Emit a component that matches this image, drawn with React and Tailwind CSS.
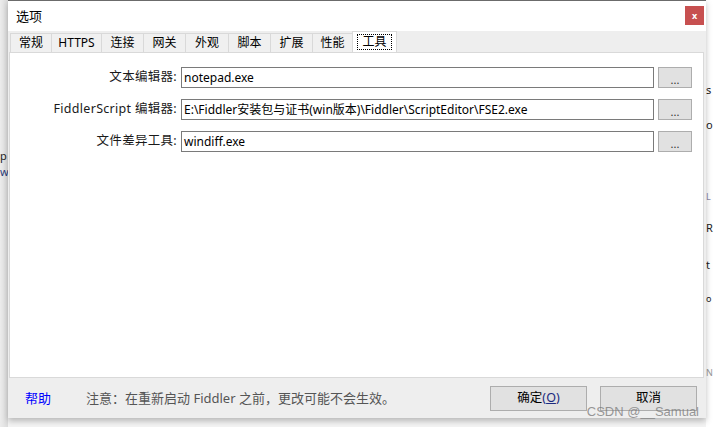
import React from "react";

const cjk = { fontFamily: '"Noto Sans", "Noto Sans CJK SC", sans-serif' };

const tabs = ["常规", "HTTPS", "连接", "网关", "外观", "脚本", "扩展", "性能"];
const tabW = [41, 50, 42, 42, 43, 42, 42, 40];

function Row({ label, value }) {
  return (
    <div className="flex items-center h-[21px]">
      <div className="w-[167px] text-right pr-[4px] text-[12.5px] text-[#1a1a1a] leading-none tracking-[0.3px] whitespace-nowrap">{label}</div>
      <div className="w-[473px] h-[21px] border border-[#7a7a7a] bg-white flex items-center px-[2px] text-[12px] text-black leading-none whitespace-nowrap overflow-hidden">
        {value}
      </div>
      <div className="ml-[4px] w-[34px] h-[21px] border border-[#adadad] bg-[#e1e1e1] flex items-center justify-center text-[11px] text-[#333] leading-none pt-[4px]">
        ...
      </div>
    </div>
  );
}

export default function App() {
  return (
    <div className="w-[714px] h-[427px] overflow-hidden relative bg-[#f4f4f4] flex" style={cjk}>
      {/* left background strip */}
      <div className="w-[8px] h-full bg-gradient-to-r from-[#ececec] to-[#dcdcdc] relative">
        <div className="absolute left-0 top-[150px] text-[11px] text-[#222] leading-none">p</div>
        <div className="absolute left-0 top-[166px] text-[11px] text-[#2a3a7a] leading-none">w.</div>
      </div>

      {/* dialog */}
      <div className="w-[698px] h-[418px] flex flex-col bg-[#eeeeee] border-t border-[#6b6b6b] shadow-[0_3px_6px_rgba(0,0,0,0.25)] relative z-10">
        {/* title bar */}
        <div className="h-[30px] bg-white flex items-center justify-between pl-[8px] pr-[2px]">
          <span className="text-[13px] text-black leading-none">选项</span>
          <div className="w-[19px] h-[19px] bg-[#c75050] flex items-center justify-center text-white text-[9px] font-bold leading-none mb-[2px]">x</div>
        </div>
        {/* tabs */}
        <div className="h-[21px] flex items-end pl-[2px] pt-[2px]">
          {tabs.map((t, i) => (
            <div
              key={t}
              className="h-[19px] border border-b-0 border-[#d9d9d9] bg-[#f0f0f0] flex items-center justify-center text-[12px] text-black leading-none -ml-px first:ml-0"
              style={{ width: tabW[i] + 1 }}
            >
              {t}
            </div>
          ))}
          <div className="h-[21px] w-[45px] border border-b-0 border-[#d9d9d9] bg-white flex items-center justify-center -ml-px">
            <div className="border border-dotted border-black px-[4px] h-[16px] flex items-center text-[12px] text-black leading-none">工具</div>
          </div>
        </div>
        {/* content panel */}
        <div className="h-[326px] mx-[1px] mr-[2px] bg-white border border-[#d9d9d9] flex flex-col gap-[11px] pt-[14px] pl-[4px]">
          <Row label="文本编辑器:" value="notepad.exe" />
          <Row label="FiddlerScript 编辑器:" value="E:\Fiddler安装包与证书(win版本)\Fiddler\ScriptEditor\FSE2.exe" />
          <Row label="文件差异工具:" value="windiff.exe" />
        </div>
        {/* footer */}
        <div className="flex-1 flex items-center pl-[17px] pr-[9px] relative">
          <span className="text-[13px] text-[#0000ff] leading-none w-[61px]">帮助</span>
          <span className="text-[13px] text-[#555] leading-none">注意：在重新启动 Fiddler 之前，更改可能不会生效。</span>
          <div className="ml-auto flex gap-[13px]">
            <div className="w-[97px] h-[25px] border border-[#adadad] bg-[#e1e1e1] flex items-center justify-center text-[12.5px] text-black leading-none">
              确定<span className="text-[#1c2a80]">(<span className="underline">O</span>)</span>
            </div>
            <div className="w-[97px] h-[25px] border border-[#adadad] bg-[#e1e1e1] flex items-center justify-center text-[12.5px] text-black leading-none">
              取消
            </div>
          </div>
          <div className="absolute right-[7px] bottom-[0px] text-[13px] text-[rgba(120,120,120,0.75)] leading-none" style={{ fontFamily: '"Liberation Sans", Arial, sans-serif' }}>
            CSDN @__Samual
          </div>
        </div>
      </div>

      {/* right background strip */}
      <div className="w-[8px] h-full bg-white relative text-[11px] leading-none text-[#222] overflow-hidden">
        <div className="absolute left-0 top-[84px]">s</div>
        <div className="absolute left-0 top-[119px]">o</div>
        <div className="absolute left-0 top-[192px] text-[#8888aa] text-[9px]">L</div>
        <div className="absolute left-0 top-[222px]">R</div>
        <div className="absolute left-0 top-[259px]">t</div>
        <div className="absolute left-0 top-[294px] text-[9px]">o</div>
        <div className="absolute left-0 top-[368px] text-[#999] text-[9px]">N</div>
      </div>
    </div>
  );
}
